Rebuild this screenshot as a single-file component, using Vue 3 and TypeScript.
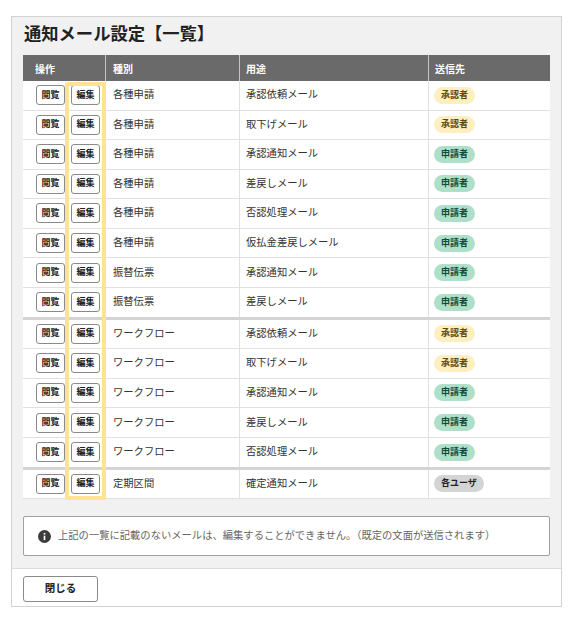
<script setup lang="ts">
interface Row { kind: string; use: string; to: 'a' | 'r' | 'u'; end?: boolean }
const rows: Row[] = [
  { kind: '各種申請', use: '承認依頼メール', to: 'a' },
  { kind: '各種申請', use: '取下げメール', to: 'a' },
  { kind: '各種申請', use: '承認通知メール', to: 'r' },
  { kind: '各種申請', use: '差戻しメール', to: 'r' },
  { kind: '各種申請', use: '否認処理メール', to: 'r' },
  { kind: '各種申請', use: '仮払金差戻しメール', to: 'r' },
  { kind: '振替伝票', use: '承認通知メール', to: 'r' },
  { kind: '振替伝票', use: '差戻しメール', to: 'r', end: true },
  { kind: 'ワークフロー', use: '承認依頼メール', to: 'a' },
  { kind: 'ワークフロー', use: '取下げメール', to: 'a' },
  { kind: 'ワークフロー', use: '承認通知メール', to: 'r' },
  { kind: 'ワークフロー', use: '差戻しメール', to: 'r' },
  { kind: 'ワークフロー', use: '否認処理メール', to: 'r', end: true },
  { kind: '定期区間', use: '確定通知メール', to: 'u' },
]
const labels = { a: '承認者', r: '申請者', u: '各ユーザ' }
</script>

<template>
  <div class="page">
    <div class="panel">
      <div class="body">
        <h1 class="title">通知メール設定【一覧】</h1>
        <div class="table">
          <div class="row head">
            <div class="cell op-head">操作</div>
            <div class="cell">種別</div>
            <div class="cell use-head">用途</div>
            <div class="cell">送信先</div>
          </div>
          <div v-for="(r, i) in rows" :key="i" class="row item" :class="{ end: r.end }">
            <div class="cell ops">
              <button class="mini">閲覧</button>
              <button class="mini">編集</button>
            </div>
            <div class="cell txt">{{ r.kind }}</div>
            <div class="cell txt use">{{ r.use }}</div>
            <div class="cell badge-cell"><span class="badge" :class="r.to">{{ labels[r.to] }}</span></div>
          </div>
          <div class="highlight"></div>
        </div>
        <div class="notice">
          <svg class="info" viewBox="0 0 16 16" width="13" height="13">
            <circle cx="8" cy="8" r="8" fill="#3c3c3c" />
            <rect x="7" y="7" width="2" height="5.4" fill="#fff" />
            <rect x="7" y="3.6" width="2" height="2" fill="#fff" />
          </svg>
          <span>上記の一覧に記載のないメールは、編集することができません。（既定の文面が送信されます）</span>
        </div>
      </div>
      <div class="foot">
        <button class="close">閉じる</button>
      </div>
    </div>
  </div>
</template>

<style>
html, body { margin: 0; background: #fff; }
</style>

<style scoped>
.page {
  width: 574px;
  height: 623px;
  padding: 16px 12px 0 11px;
  box-sizing: border-box;
  font-family: "Noto Sans CJK JP", "Liberation Sans", sans-serif;
}
.panel {
  height: 591px;
  box-sizing: border-box;
  border: 1px solid #d2d2d2;
  display: flex;
  flex-direction: column;
}
.body {
  flex: 1;
  background: #f1f1f1;
  padding: 0 11px;
  border-bottom: 1px solid #dcdcdc;
}
.title {
  margin: 0 0 0 1px;
  height: 38px;
  line-height: 32px;
  font-size: 17.3px;
  font-weight: 700;
  color: #222;
}
.table {
  position: relative;
  width: 527px;
}
.row {
  display: grid;
  grid-template-columns: 83px 134px 189px 121px;
  box-sizing: border-box;
}
.head {
  height: 26px;
  background: #6a6a6a;
  color: #fff;
  font-size: 10px;
  font-weight: 700;
}
.head .cell {
  display: flex;
  align-items: center;
  padding-left: 7px;
  border-right: 1px solid #c4c4c4;
  box-sizing: border-box;
}
.head .cell:last-child { border-right: 0; padding-left: 6px; }
.head .op-head { padding-left: 12px; }
.head .use-head { padding-left: 6px; }
.item {
  height: 29.55px;
  background: #fff;
  border-bottom: 1px solid #e0e0e0;
}
.item.end {
  height: 31.8px;
  border-bottom: 3px solid #d4d4d4;
}
.item .cell {
  display: flex;
  align-items: center;
  padding-left: 7px;
  border-right: 1px solid #e0e0e0;
  box-sizing: border-box;
}
.item .cell:last-child { border-right: 0; }
.item .badge-cell { padding-left: 5px; }
.item .txt {
  font-size: 10.3px;
  color: #333;
  padding-bottom: 3px;
}
.item .use { padding-left: 6px; }
.item .ops {
  padding-left: 13px;
  gap: 6px;
}
.mini {
  width: 29px;
  height: 20px;
  padding: 0 0 2px;
  box-sizing: border-box;
  border: 1.3px solid #8a8a8a;
  border-radius: 3px;
  background: #fff;
  color: #222;
  font: 700 9px "Noto Sans CJK JP", sans-serif;
}
.badge {
  height: 17px;
  line-height: 15px;
  padding: 0 7px;
  border-radius: 9px;
  font-size: 9px;
  font-weight: 700;
}
.badge.a { background: #fdefbf; color: #5c4a12; }
.badge.r { background: #aee0c9; color: #124a38; }
.badge.u { background: #d4d4d4; color: #222; }
.highlight {
  position: absolute;
  left: 42px;
  top: 27px;
  width: 41px;
  bottom: -1px;
  box-sizing: border-box;
  border: 4px solid #fde392;
  border-radius: 2px;
  pointer-events: none;
}
.notice {
  margin-top: 16.5px;
  height: 40.5px;
  box-sizing: border-box;
  background: #fff;
  border: 1px solid #a0a0a0;
  border-bottom-width: 1.5px;
  border-radius: 2px;
  display: flex;
  align-items: center;
  gap: 7px;
  padding: 0 14px 2px;
  font-size: 10.3px;
  color: #666;
}
.info { flex: none; margin-top: 3px; }
.foot {
  height: 37px;
  box-sizing: border-box;
  background: #fff;
  padding: 7px 11px 0;
  display: flex;
  align-items: flex-start;
}
.close {
  width: 75px;
  height: 26px;
  padding: 0 0 3px;
  box-sizing: border-box;
  background: #fff;
  border: 1.3px solid #8a8a8a;
  border-radius: 3px;
  color: #222;
  font: 700 10.5px "Noto Sans CJK JP", sans-serif;
}
</style>
